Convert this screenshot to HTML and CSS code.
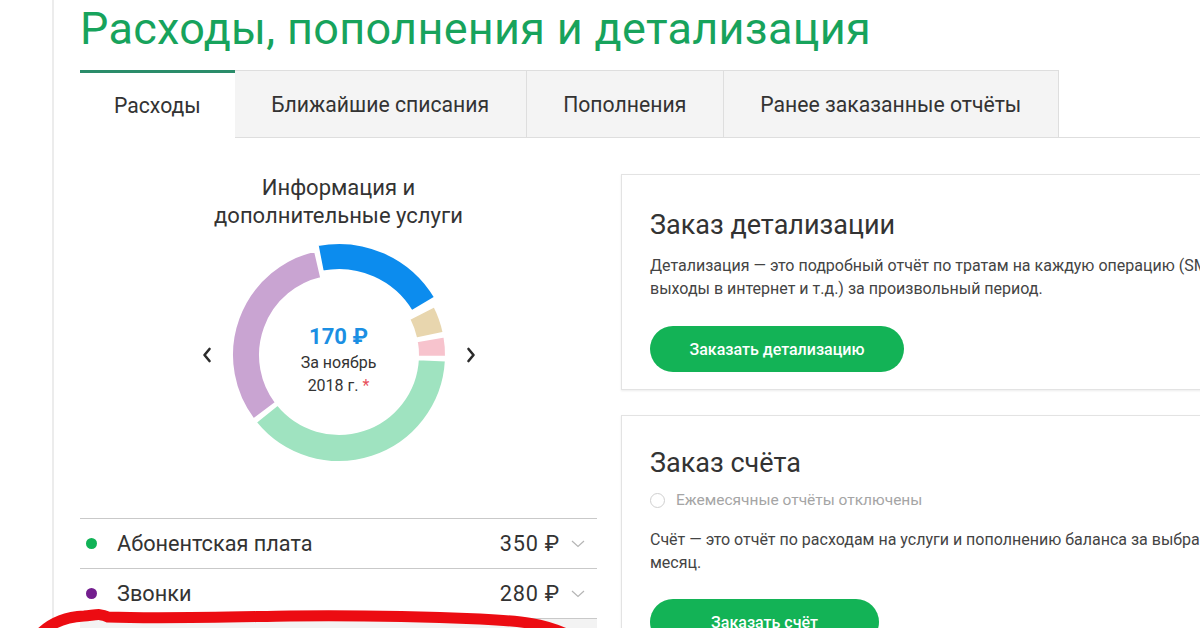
FILE: index.html
```html
<!DOCTYPE html>
<html lang="ru">
<head>
<meta charset="utf-8">
<title>Расходы, пополнения и детализация</title>
<link rel="stylesheet" href="styles.css">
</head>
<body>
<div class="page">
  <h1 class="page-title">Расходы, пополнения и детализация</h1>

  <nav class="tabs">
    <div class="tab tab-active">Расходы</div>
    <div class="tab">Ближайшие списания</div>
    <div class="tab">Пополнения</div>
    <div class="tab">Ранее заказанные отчёты</div>
    <div class="tabs-rest"></div>
  </nav>

  <main class="content">
    <section class="expenses">
      <h2 class="chart-title">Информация и<br>дополнительные услуги</h2>
      <div class="chart-row">
        <button class="chart-arrow" aria-label="Назад">
          <svg width="10" height="16" viewBox="0 0 10 16"><path d="M7.5 2 L2.5 8 L7.5 14" fill="none" stroke="#2b2b2b" stroke-width="2.6" stroke-linecap="round" stroke-linejoin="round"/></svg>
        </button>
        <div class="donut">
          <svg class="donut-svg" width="240" height="240" viewBox="0 0 240 240">
            <g stroke="#fff" stroke-width="2" stroke-linejoin="round">
              <path fill="#c9a4d2" d="M34.55 184.39 A107 107 0 0 1 95.93 15.74 L102.23 43.02 A79 79 0 0 0 56.91 167.54Z"/>
              <path fill="#0c8cee" d="M98.63 10.06 A112 112 0 0 1 216.0 62.32 L192.86 76.22 A85 85 0 0 0 103.78 36.56Z"/>
              <path fill="#e8d6ae" d="M215.34 71.42 A107 107 0 0 1 224.66 97.75 L197.27 103.58 A79 79 0 0 0 190.39 84.13Z"/>
              <path fill="#f7c3cd" d="M225.37 101.42 A107 107 0 0 1 226.98 121.87 L198.99 121.38 A79 79 0 0 0 197.80 106.28Z"/>
              <path fill="#9fe3c0" d="M226.85 125.60 A107 107 0 0 1 36.85 187.34 L58.61 169.71 A79 79 0 0 0 198.89 124.13Z"/>
            </g>
          </svg>
          <div class="donut-center">
            <div class="donut-sum">170 ₽</div>
            <div class="donut-period">За ноябрь<br>2018 г. <span class="star">*</span></div>
          </div>
        </div>
        <button class="chart-arrow" aria-label="Вперёд">
          <svg width="10" height="16" viewBox="0 0 10 16"><path d="M2.5 2 L7.5 8 L2.5 14" fill="none" stroke="#2b2b2b" stroke-width="2.6" stroke-linecap="round" stroke-linejoin="round"/></svg>
        </button>
      </div>

      <ul class="exp-list">
        <li class="exp-row">
          <span class="dot dot-green"></span>
          <span class="exp-name">Абонентская плата</span>
          <span class="exp-sum">350 ₽</span>
          <svg class="exp-chev" width="14" height="8" viewBox="0 0 14 8"><path d="M1 1 L7 6.5 L13 1" fill="none" stroke="#b5b5b5" stroke-width="1.2"/></svg>
        </li>
        <li class="exp-row">
          <span class="dot dot-purple"></span>
          <span class="exp-name">Звонки</span>
          <span class="exp-sum">280 ₽</span>
          <svg class="exp-chev" width="14" height="8" viewBox="0 0 14 8"><path d="M1 1 L7 6.5 L13 1" fill="none" stroke="#b5b5b5" stroke-width="1.2"/></svg>
        </li>
        <li class="exp-row exp-row-grey"></li>
      </ul>
    </section>

    <section class="orders">
      <div class="card card-detail">
        <h3 class="card-title">Заказ детализации</h3>
        <p class="card-text">Детализация — это подробный отчёт по тратам на каждую операцию (SMS, звонки,<br>выходы в интернет и т.д.) за произвольный период.</p>
        <button class="btn btn-detail">Заказать детализацию</button>
      </div>
      <div class="card card-bill">
        <h3 class="card-title">Заказ счёта</h3>
        <label class="radio-line"><span class="radio"></span>Ежемесячные отчёты отключены</label>
        <p class="card-text card-text-2">Счёт — это отчёт по расходам на услуги и пополнению баланса за выбранный<br>месяц.</p>
        <button class="btn btn-bill">Заказать счёт</button>
      </div>
    </section>
  </main>

  <svg class="scribble" width="600" height="30" viewBox="0 0 600 30">
    <path d="M38 36 C 48 25, 62 17, 84 16 C 96 15, 100 13, 108 17 C 160 19, 230 17, 290 16 C 360 15, 430 17, 480 19 C 520 21, 545 23, 570 36" fill="none" stroke="#ec0c12" stroke-width="11" stroke-linecap="round" stroke-linejoin="round"/>
  </svg>
</div>
</body>
</html>
```

FILE: styles.css
```css
* { box-sizing: border-box; }

html, body {
  margin: 0;
  padding: 0;
  background: #fff;
  overflow: hidden;
}

body {
  width: 1200px;
  height: 628px;
  font-family: "Roboto", "Liberation Sans", sans-serif;
  color: #333;
}

.page {
  position: relative;
  margin-left: 52px;
  width: 1250px;
  height: 628px;
  border-left: 2px solid #ececec;
  padding-left: 26px;
}

.page-title {
  margin: 0;
  height: 70px;
  padding-top: 2px;
  font-size: 45px;
  line-height: 54px;
  font-weight: 400;
  color: #17a35c;
  letter-spacing: 0.3px;
}

.tabs {
  display: flex;
  height: 68px;
}

.tab {
  height: 68px;
  padding: 0 36.5px;
  display: flex;
  align-items: center;
  font-size: 21.2px;
  color: #333;
  background: #f4f4f4;
  border: 1px solid #dedede;
  border-left: none;
  white-space: nowrap;
}

.tab-active {
  background: #fff;
  border: none;
  border-top: 3px solid #2a8c6a;
  padding-left: 34px;
  padding-right: 34px;
}

.tabs-rest {
  flex: 1;
  border-bottom: 1px solid #dedede;
}

.content {
  display: grid;
  grid-template-columns: 517px 600px;
  column-gap: 24px;
}

.expenses {
  padding-top: 36px;
}

.chart-title {
  margin: 0;
  text-align: center;
  font-size: 22px;
  font-weight: 400;
  line-height: 28px;
  color: #333;
}

.chart-row {
  display: flex;
  justify-content: center;
  align-items: center;
  gap: 7px;
  margin-top: 5px;
}

.chart-arrow {
  background: none;
  border: none;
  padding: 0;
  width: 10px;
  height: 16px;
  display: flex;
}

.donut {
  display: grid;
  width: 240px;
  height: 240px;
}

.donut-svg,
.donut-center {
  grid-area: 1 / 1;
}

.donut-center {
  align-self: center;
  justify-self: center;
  text-align: center;
  margin-top: 9px;
}

.donut-sum {
  font-size: 22px;
  font-weight: 700;
  color: #1b8fe3;
  line-height: 28px;
}

.donut-period {
  font-size: 16px;
  line-height: 23px;
  color: #333;
}

.star { color: #e8505b; }

.exp-list {
  list-style: none;
  margin: 43px 0 0;
  padding: 0;
  border-top: 1px solid #c9c9c9;
}

.exp-row {
  display: flex;
  align-items: center;
  height: 50px;
  border-bottom: 1px solid #c9c9c9;
  padding-left: 6px;
  padding-right: 12px;
  font-size: 21.7px;
  color: #333;
}

.exp-row-grey {
  background: #f3f3f3;
  border-bottom: none;
}

.dot {
  width: 11px;
  height: 11px;
  border-radius: 50%;
  margin-right: 20px;
}

.dot-green { background: #10b256; }
.dot-purple { background: #731e8e; }

.exp-name { flex: 1; }

.exp-sum {
  margin-right: 11px;
  letter-spacing: 0.8px;
}

.orders {
  padding-top: 36px;
  display: flex;
  flex-direction: column;
  gap: 25px;
}

.card {
  border: 1px solid #e3e3e3;
  box-shadow: 0 1px 2px rgba(0, 0, 0, 0.08);
  padding: 30px 28px 16px;
  background: #fff;
}

.card-detail {
  padding-top: 33px;
  padding-bottom: 17px;
}

.card-title {
  margin: 0;
  font-size: 27px;
  font-weight: 400;
  line-height: 34px;
  color: #333;
}

.card-text {
  margin: 12px 0 0;
  font-size: 16px;
  line-height: 23px;
  color: #444;
  white-space: nowrap;
}

.card-text-2 { margin-top: 16px; }

.radio-line {
  display: flex;
  align-items: center;
  margin-top: 9px;
  font-size: 15.5px;
  line-height: 23px;
  color: #a5a5a5;
}

.radio {
  width: 15px;
  height: 15px;
  border: 1px solid #cfcfcf;
  border-radius: 50%;
  margin-right: 11px;
}

.btn {
  display: block;
  margin-top: 26px;
  height: 46px;
  border: none;
  border-radius: 23px;
  background: #13b356;
  color: #fff;
  font-family: "Roboto", "Liberation Sans", sans-serif;
  font-size: 16px;
  font-weight: 500;
}

.btn-detail { width: 254px; }
.btn-bill { width: 229px; margin-top: 25px; }

.scribble {
  position: absolute;
  left: -54px;
  top: 600px;
}
```
